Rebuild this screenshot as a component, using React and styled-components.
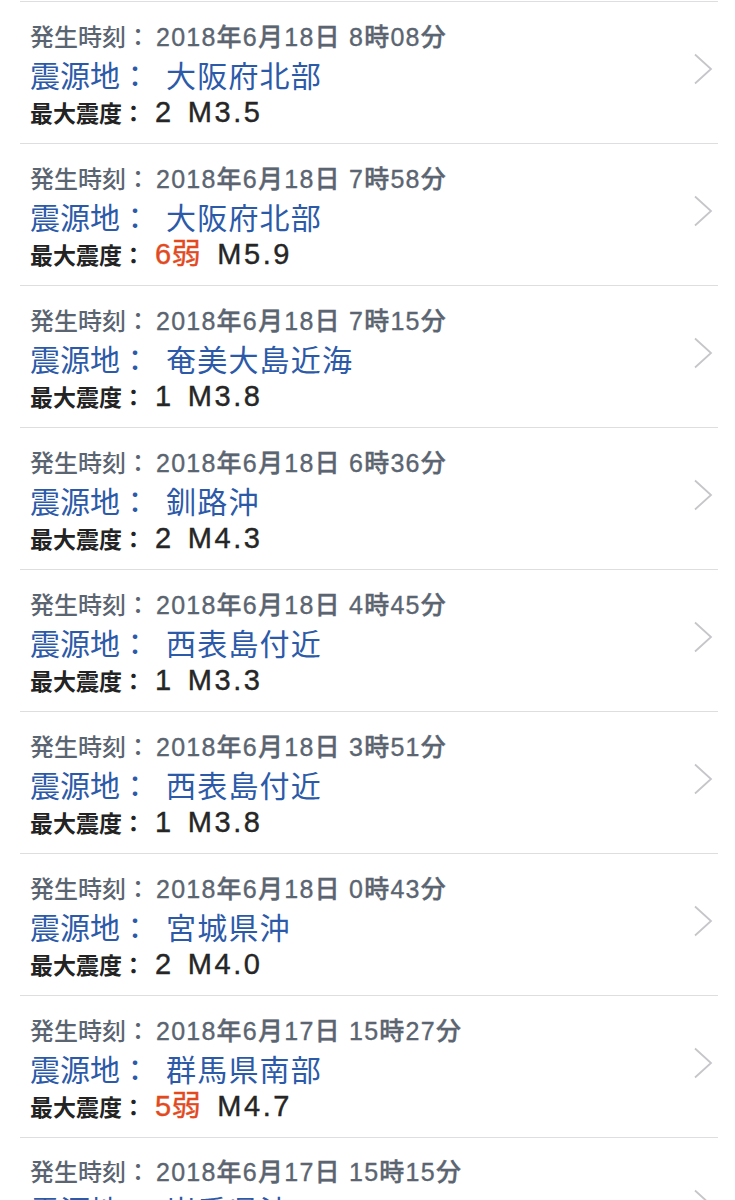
import React from "react";
import styled, { createGlobalStyle } from "styled-components";

const Global = createGlobalStyle`
  html, body { margin: 0; padding: 0; background: #ffffff; }
  body { font-family: "Noto Sans CJK JP", "Noto Sans", sans-serif; }
`;

const latin = `"Liberation Sans", "Noto Sans CJK JP", sans-serif`;

const List = styled.div`
  padding: 1px 17px 0 20px;
  background: #fff;
`;

const Row = styled.div`
  display: flex;
  align-items: center;
  border-top: 1px solid #dedee0;
  height: 140.95px;
  padding: 0 5px 0 10px;
`;

const Content = styled.div`
  flex: 1;
  display: flex;
  flex-direction: column;
  padding-top: 2px;
`;

const TimeLine = styled.div`
  font-size: 24px;
  line-height: 36px;
  font-weight: 500;
  color: #5b6571;
  white-space: nowrap;
`;

const DateText = styled.span`
  font-family: ${latin};
  font-size: 25px;
  letter-spacing: 1.25px;
  -webkit-text-stroke: 0.35px #5b6571;
`;

const PlaceLine = styled.div`
  font-size: 30px;
  line-height: 38px;
  font-weight: 400;
  color: #2c5aa9;
  white-space: nowrap;
`;

const PlaceText = styled.span`
  letter-spacing: 1.2px;
`;

const Gap = styled.span`
  display: inline-block;
  width: ${(p) => p.$w}px;
`;

const ScaleLine = styled.div`
  display: flex;
  align-items: baseline;
  height: 36px;
  line-height: 38px;
  white-space: nowrap;
`;

const ScaleLabel = styled.span`
  font-size: 23px;
  font-weight: 700;
  color: #232323;
`;

const Intensity = styled.span`
  font-family: ${latin};
  font-size: 29px;
  font-weight: 400;
  letter-spacing: 0.5px;
  -webkit-text-stroke: 0.4px currentColor;
  color: ${(p) => (p.$strong ? "#e2491f" : "#262626")};
  margin-left: 10px;
  margin-right: 16px;
`;

const Magnitude = styled.span`
  font-family: ${latin};
  font-size: 29px;
  font-weight: 400;
  letter-spacing: 2.6px;
  -webkit-text-stroke: 0.4px #262626;
  color: #262626;
`;

const Chevron = styled.svg`
  flex: none;
  width: 20px;
  height: 32px;
  margin-top: -6px;
`;

const data = [
  ["2018年6月18日 8時08分", "大阪府北部", "2", "M3.5"],
  ["2018年6月18日 7時58分", "大阪府北部", "6弱", "M5.9"],
  ["2018年6月18日 7時15分", "奄美大島近海", "1", "M3.8"],
  ["2018年6月18日 6時36分", "釧路沖", "2", "M4.3"],
  ["2018年6月18日 4時45分", "西表島付近", "1", "M3.3"],
  ["2018年6月18日 3時51分", "西表島付近", "1", "M3.8"],
  ["2018年6月18日 0時43分", "宮城県沖", "2", "M4.0"],
  ["2018年6月17日 15時27分", "群馬県南部", "5弱", "M4.7"],
  ["2018年6月17日 15時15分", "岩手県沖", "1", "M3.6"],
];

export default function App() {
  return (
    <>
      <Global />
      <List>
        {data.map(([time, place, shindo, mag], i) => (
          <Row key={i}>
            <Content>
              <TimeLine>
                発生時刻：<Gap $w={6} />
                <DateText>{time}</DateText>
              </TimeLine>
              <PlaceLine>
                震源地：<Gap $w={16} />
                <PlaceText>{place}</PlaceText>
              </PlaceLine>
              <ScaleLine>
                <ScaleLabel>最大震度：</ScaleLabel>
                <Intensity $strong={shindo.includes("弱") || shindo.includes("強")}>
                  {shindo}
                </Intensity>
                <Magnitude>{mag}</Magnitude>
              </ScaleLine>
            </Content>
            <Chevron viewBox="0 0 20 32">
              <polyline
                points="2,1.5 18,16 2,30.5"
                fill="none"
                stroke="#c6c6ca"
                strokeWidth="1.8"
              />
            </Chevron>
          </Row>
        ))}
      </List>
    </>
  );
}
